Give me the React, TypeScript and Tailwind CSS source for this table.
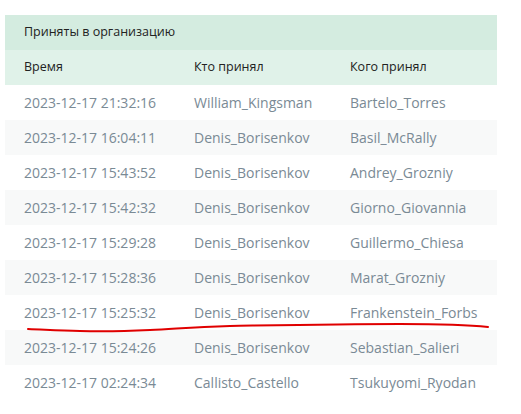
const rows = [
  ["2023-12-17 21:32:16", "William_Kingsman", "Bartelo_Torres"],
  ["2023-12-17 16:04:11", "Denis_Borisenkov", "Basil_McRally"],
  ["2023-12-17 15:43:52", "Denis_Borisenkov", "Andrey_Grozniy"],
  ["2023-12-17 15:42:32", "Denis_Borisenkov", "Giorno_Giovannia"],
  ["2023-12-17 15:29:28", "Denis_Borisenkov", "Guillermo_Chiesa"],
  ["2023-12-17 15:28:36", "Denis_Borisenkov", "Marat_Grozniy"],
  ["2023-12-17 15:25:32", "Denis_Borisenkov", "Frankenstein_Forbs"],
  ["2023-12-17 15:24:26", "Denis_Borisenkov", "Sebastian_Salieri"],
  ["2023-12-17 02:24:34", "Callisto_Castello", "Tsukuyomi_Ryodan"],
];

export default function App() {
  return (
    <div className="relative w-[521px] h-[414px] bg-white pt-[15px] pl-[5px] font-['Open_Sans',sans-serif]">
      <div className="w-[492px]">
        {/* Title */}
        <div className="h-[35px] flex items-center pl-[19px] bg-[#d4ece0] text-[12.5px] text-[#222]">
          Приняты в организацию
        </div>
        {/* Header */}
        <div className="h-[35px] grid grid-cols-[170px_156px_1fr] items-center bg-[#e0f2e9] text-[12.5px] text-[#222]">
          <div className="pl-[19px]">Время</div>
          <div className="pl-[19px]">Кто принял</div>
          <div className="pl-[19px]">Кого принял</div>
        </div>
        {rows.map((r, i) => (
          <div
            key={i}
            className={`h-[35px] grid grid-cols-[170px_156px_1fr] items-center text-[14px] text-[#7a8a95] ${
              i % 2 === 1 ? "bg-[#f8f9f9]" : "bg-white"
            }`}
          >
            <div className="pl-[19px]">{r[0]}</div>
            <div className="pl-[19px]">{r[1]}</div>
            <div className="pl-[19px]">{r[2]}</div>
          </div>
        ))}
      </div>

      {/* hand-drawn red underline */}
      <svg className="absolute left-0 top-0 pointer-events-none" width="521" height="414">
        <path
          d="M28 329 C 50 330, 60 331, 80 331 C 110 332, 130 331, 150 330 C 175 329, 190 327, 230 326 C 290 325, 340 324, 400 324 C 440 324, 470 325, 488 327"
          fill="none"
          stroke="#e00000"
          strokeWidth="2"
          strokeLinecap="round"
        />
      </svg>
    </div>
  );
}
